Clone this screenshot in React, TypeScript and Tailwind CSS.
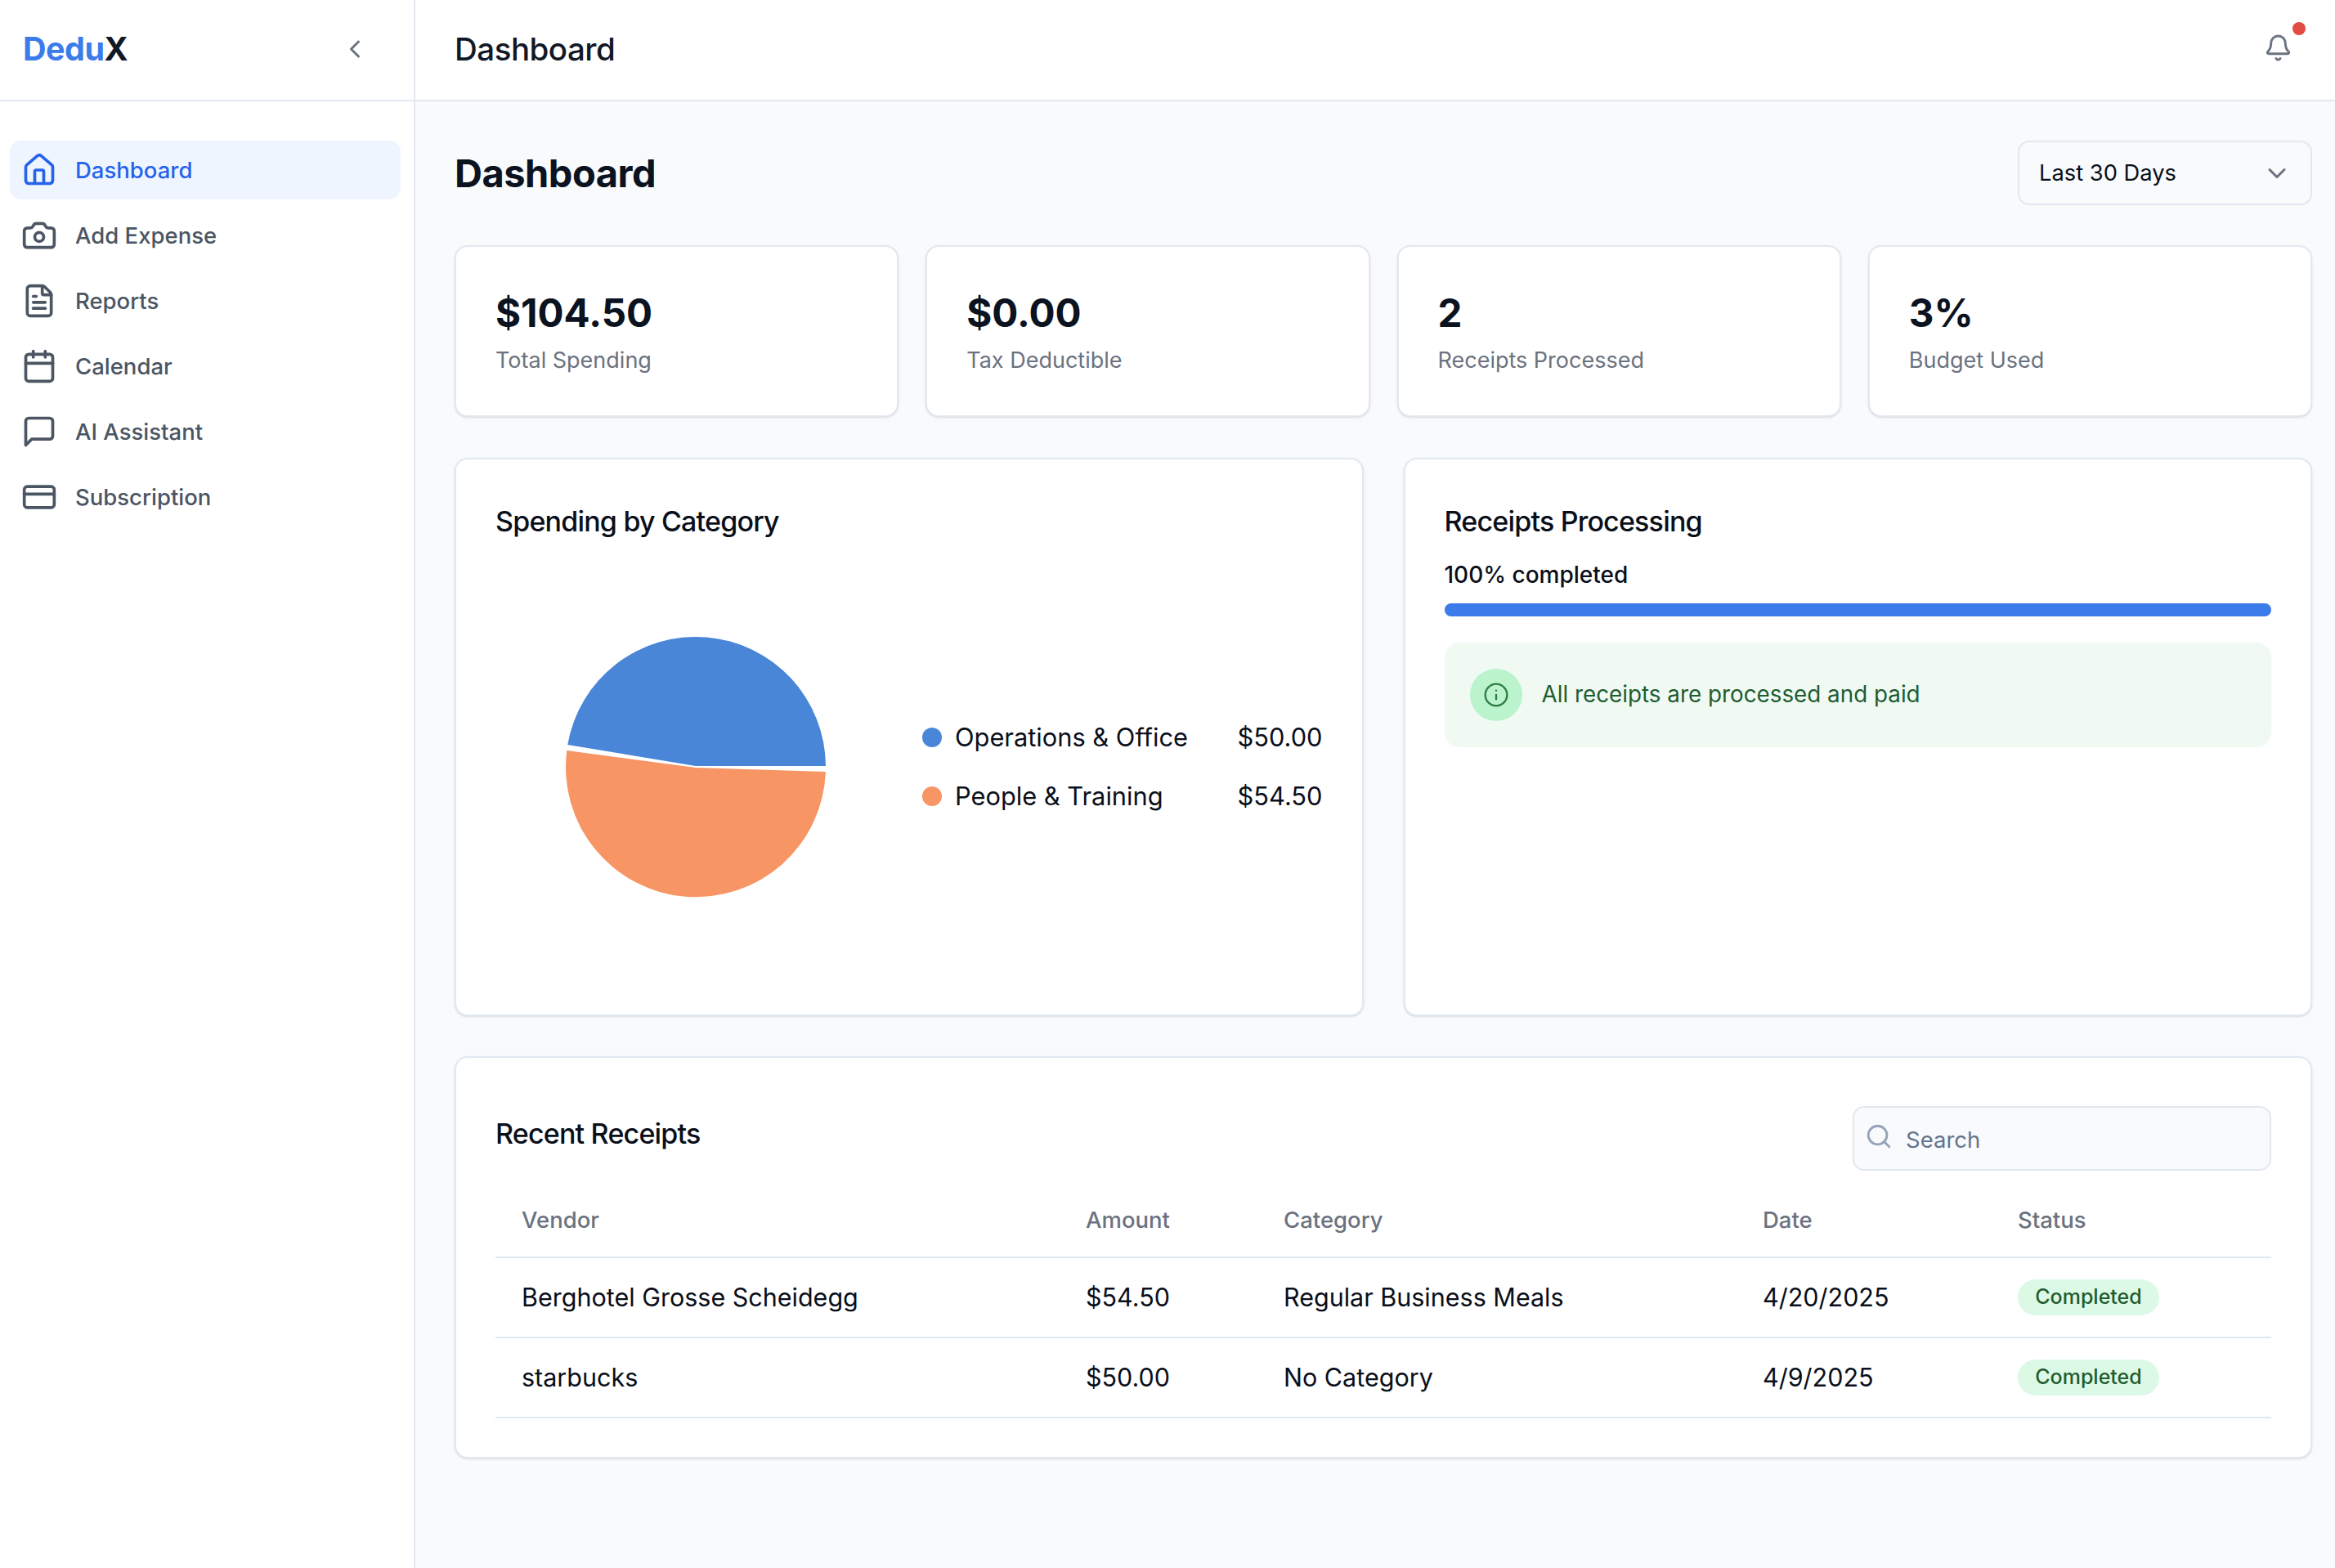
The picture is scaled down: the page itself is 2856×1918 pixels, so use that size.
import React from 'react';
import { House, Camera, FileText, Calendar, CreditCard, ChevronLeft, ChevronDown, Bell, Search, Info } from 'lucide-react';

// older lucide bubble, the tail in the current package is different
const ChatBubble = ({ size, strokeWidth }: { size: number; strokeWidth: number }) => (
    <svg width={size} height={size} viewBox="0 0 24 24" fill="none" stroke="currentColor" strokeWidth={strokeWidth} strokeLinecap="round" strokeLinejoin="round">
        <path d="M21 15a2 2 0 0 1-2 2H7l-4 4V5a2 2 0 0 1 2-2h14a2 2 0 0 1 2 2z" />
    </svg>
);

const navItems = [
    { label: 'Dashboard', icon: House, active: true },
    { label: 'Add Expense', icon: Camera, active: false },
    { label: 'Reports', icon: FileText, active: false },
    { label: 'Calendar', icon: Calendar, active: false },
    { label: 'AI Assistant', icon: ChatBubble, active: false },
    { label: 'Subscription', icon: CreditCard, active: false },
];

const stats = [
    { value: '$104.50', label: 'Total Spending' },
    { value: '$0.00', label: 'Tax Deductible' },
    { value: '2', label: 'Receipts Processed' },
    { value: '3%', label: 'Budget Used' },
];

const receipts = [
    { vendor: 'Berghotel Grosse Scheidegg', amount: '$54.50', category: 'Regular Business Meals', date: '4/20/2025' },
    { vendor: 'starbucks', amount: '$50.00', category: 'No Category', date: '4/9/2025' },
];

const legend = [
    { name: 'Operations & Office', value: '$50.00', dot: 'bg-[#4a86d8]' },
    { name: 'People & Training', value: '$54.50', dot: 'bg-[#f79564]' },
];

const cols = 'grid grid-cols-[690px_242px_586px_312px_1fr] items-center';

const PieChart = () => (
    <svg width="320" height="320" viewBox="691 778 320 320" className="shrink-0">
        <path d="M851 937 L1010 937 A159 159 0 0 0 694.3 911 Z" fill="#4a86d8" />
        <path d="M851 939 L693.3 918 A159 159 0 1 0 1009.9 944 Z" fill="#f79564" />
    </svg>
);

export default function App() {
    return (
        <div className="flex min-h-screen bg-white font-['Inter',sans-serif] text-[#0a0f1a]">
            <aside className="w-[508px] shrink-0 border-r-2 border-[#e2e8f0] bg-white">
                <div className="flex h-[124px] items-center justify-between border-b-2 border-[#e2e8f0] pl-[28px] pr-[54px]">
                    <span className="text-[39.5px] font-bold tracking-[-0.5px] text-[#3b7bea]">
                        Dedu<span className="text-[#111827]">X</span>
                    </span>
                    <ChevronLeft size={36} strokeWidth={2} className="mb-[3px] text-[#6b7280]" />
                </div>
                <nav className="flex flex-col gap-[8px] pl-[12px] pr-[16px] pt-[48px]">
                    {navItems.map(({ label, icon: Icon, active }) => (
                        <div
                            key={label}
                            className={
                                active
                                    ? 'flex h-[72px] items-center gap-[22px] rounded-[14px] bg-[#eff5ff] pl-[14px] text-[#2563eb]'
                                    : 'flex h-[72px] items-center gap-[22px] rounded-[14px] pl-[14px] text-[#4b5563]'
                            }
                        >
                            <Icon size={44} strokeWidth={2} />
                            <span className="pt-[1px] text-[27.5px] font-medium">{label}</span>
                        </div>
                    ))}
                </nav>
            </aside>

            <div className="flex min-w-0 flex-1 flex-col bg-[#f8fafc]">
                <header className="flex h-[124px] items-center justify-between border-b-2 border-[#e2e8f0] bg-white pl-[48px] pr-[52px]">
                    <span className="text-[38.5px] font-medium tracking-[-0.5px] text-[#111827]">Dashboard</span>
                    <div className="relative mb-[6px]">
                        <Bell size={35} strokeWidth={2} className="text-[#6b7280]" />
                        <span className="absolute right-[-16px] top-[-14px] h-[16px] w-[16px] rounded-full bg-[#e24c43]" />
                    </div>
                </header>

                <main className="flex flex-col pb-[50px] pl-[48px] pr-[28px] pt-[48px]">
                    <div className="flex h-[79px] items-center justify-between">
                        <h1 className="pt-[2px] text-[47px] font-bold tracking-[-0.5px] text-[#0b1220]">Dashboard</h1>
                        <div className="flex h-[79px] w-[360px] items-center justify-between rounded-[14px] border-2 border-[#e2e8f0] bg-[#f8fafc] pl-[24px] pr-[23px]">
                            <span className="pt-[2px] text-[27.3px]">Last 30 Days</span>
                            <ChevronDown size={36} strokeWidth={2} className="text-[#6b7280]" />
                        </div>
                    </div>

                    <div className="mt-[49px] grid grid-cols-4 gap-[33px]">
                        {stats.map(s => (
                            <div key={s.label} className="flex h-[210px] flex-col justify-center rounded-[16px] border-2 border-[#e2e8f0] bg-white pl-[48px] shadow-sm">
                                <div className="pt-[2px] text-[47.5px] font-bold leading-[64px] text-[#0b1220]">{s.value}</div>
                                <div className="mt-[6px] text-[27px] leading-[40px] text-[#6b7280]">{s.label}</div>
                            </div>
                        ))}
                    </div>

                    <div className="mt-[50px] grid h-[683px] grid-cols-2 gap-[49px]">
                        <div className="rounded-[16px] border-2 border-[#e2e8f0] bg-white pl-[48px] pr-[48px] pt-[48px] shadow-sm">
                            <h2 className="text-[34px] font-medium leading-[56px] tracking-[-0.8px]">Spending by Category</h2>
                            <div className="mt-[112px] flex items-center pl-[85px]">
                                <PieChart />
                                <div className="ml-[117px] flex flex-1 flex-col gap-[32px] text-[30.8px]">
                                    {legend.map(l => (
                                        <div key={l.name} className="flex items-center justify-between leading-[40px]">
                                            <div className="flex items-center gap-[16px]">
                                                <span className={`h-[24px] w-[24px] rounded-full ${l.dot}`} />
                                                <span>{l.name}</span>
                                            </div>
                                            <span>{l.value}</span>
                                        </div>
                                    ))}
                                </div>
                            </div>
                        </div>

                        <div className="rounded-[16px] border-2 border-[#e2e8f0] bg-white pl-[48px] pr-[48px] pt-[48px] shadow-sm">
                            <h2 className="text-[34px] font-medium leading-[56px] tracking-[-0.8px]">Receipts Processing</h2>
                            <div className="mt-[17px] text-[28px] font-medium leading-[40px]">100% completed</div>
                            <div className="mt-[15px] h-[16px] rounded-full bg-[#3b7bea]" />
                            <div className="mt-[32px] flex h-[128px] items-center gap-[24px] rounded-[18px] bg-[#f0faf3] pl-[31px]">
                                <div className="flex h-[64px] w-[64px] items-center justify-center rounded-full bg-[#bbf3cd]">
                                    <Info size={32} strokeWidth={1.75} className="text-[#2f7d45]" />
                                </div>
                                <span className="text-[27.8px] text-[#1f5c32]">All receipts are processed and paid</span>
                            </div>
                        </div>
                    </div>

                    <div className="mt-[49px] rounded-[16px] border-2 border-[#e2e8f0] bg-white px-[48px] pb-[47px] pt-[59px] shadow-sm">
                        <div className="flex items-center justify-between">
                            <h2 className="pb-[12px] text-[34px] font-medium leading-[56px] tracking-[-0.8px]">Recent Receipts</h2>
                            <div className="flex h-[79px] w-[512px] items-center gap-[16px] rounded-[14px] border-2 border-[#e2e8f0] bg-[#f8fafc] pl-[13px]">
                                <Search size={34} strokeWidth={2} className="mb-[6px] text-[#94a3b8]" />
                                <span className="pt-[4px] text-[27.5px] text-[#64748b]">Search</span>
                            </div>
                        </div>

                        <div className={`${cols} mt-[16px] h-[91px] border-b-2 border-[#e2e8f0] text-[27.5px] font-medium text-[#6b7280]`}>
                            <div className="pl-[32px]">Vendor</div>
                            <div className="pl-[32px]">Amount</div>
                            <div className="pl-[32px]">Category</div>
                            <div className="pl-[32px]">Date</div>
                            <div className="pl-[32px]">Status</div>
                        </div>
                        {receipts.map(r => (
                            <div key={r.vendor} className={`${cols} h-[98px] border-b-2 border-[#e2e8f0] text-[30.5px]`}>
                                <div className="pl-[32px]">{r.vendor}</div>
                                <div className="pl-[32px]">{r.amount}</div>
                                <div className="pl-[32px]">{r.category}</div>
                                <div className="pl-[32px]">{r.date}</div>
                                <div className="flex pl-[32px]">
                                    <span className="flex h-[44px] w-[173px] items-center justify-center rounded-full bg-[#dcf9e6] text-[25px] font-medium text-[#1f5c2e]">
                                        Completed
                                    </span>
                                </div>
                            </div>
                        ))}
                    </div>
                </main>
            </div>
        </div>
    );
}
